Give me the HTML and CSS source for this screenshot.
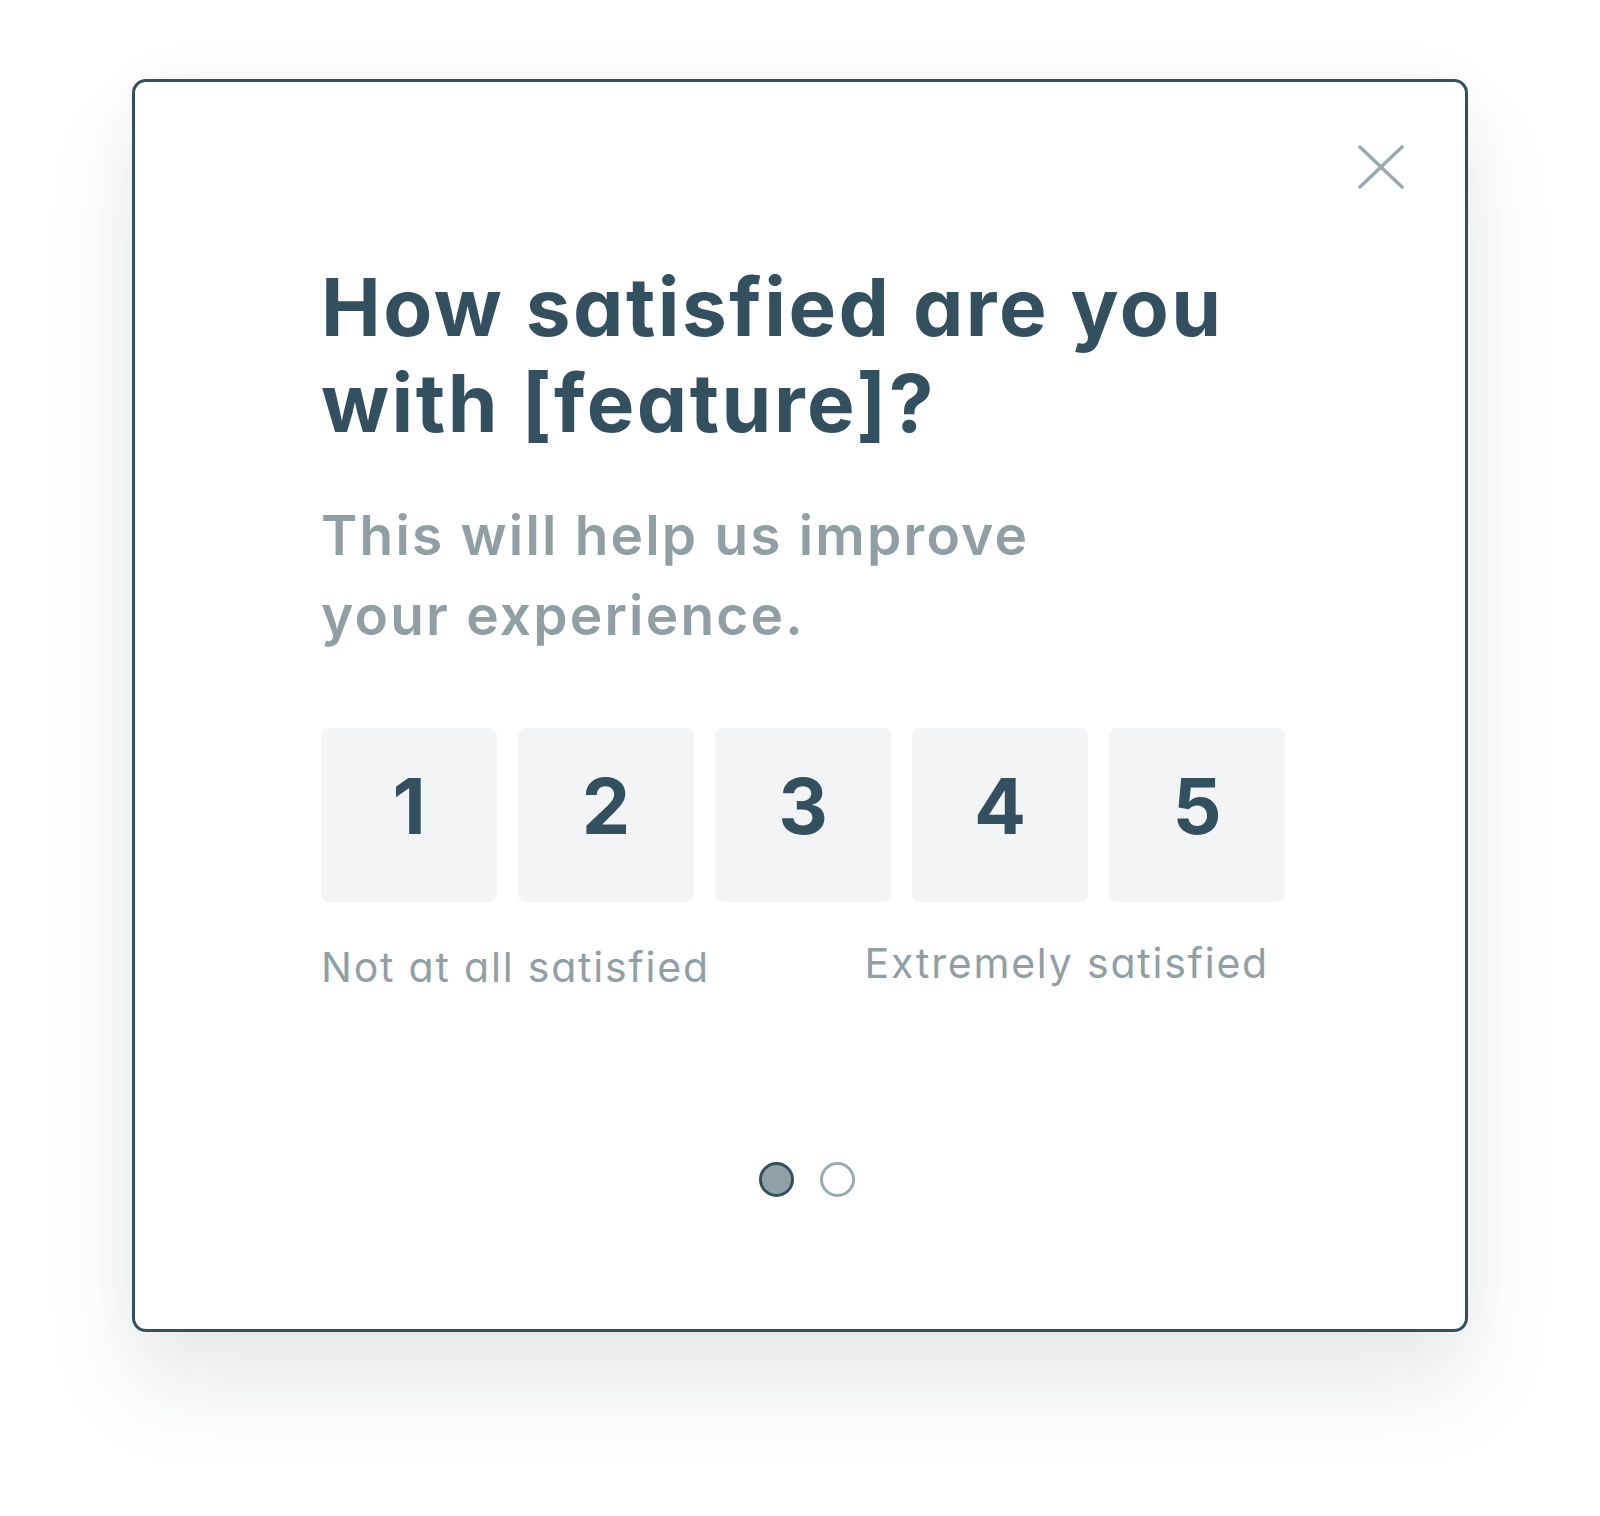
FILE: index.html
```html
<!DOCTYPE html>
<html>
<head>
    <title>Feedback</title>
    <link rel="stylesheet" href="styles.css">
</head>
<body>
    <div class="survey-card">
        <button class="close-btn" type="button" aria-label="Close">
            <svg width="46" height="44" viewBox="0 0 46 44">
                <line x1="2" y1="2" x2="44" y2="42" />
                <line x1="44" y1="2" x2="2" y2="42" />
            </svg>
        </button>

        <h1 class="survey-title">How satisfied are you<br>with [feature]?</h1>
        <p class="survey-sub">This will help us improve<br>your experience.</p>

        <div class="scale">
            <button class="scale-item" type="button">1</button>
            <button class="scale-item" type="button">2</button>
            <button class="scale-item" type="button">3</button>
            <button class="scale-item" type="button">4</button>
            <button class="scale-item" type="button">5</button>
        </div>

        <div class="scale-labels">
            <span class="scale-label">Not at all satisfied</span>
            <span class="scale-label scale-label-right">Extremely satisfied</span>
        </div>

        <div class="pager">
            <span class="pager-dot active"></span>
            <span class="pager-dot"></span>
        </div>
    </div>
</body>
</html>
```

FILE: styles.css
```css
html, body {
    min-height: 1516px;
}

body {
    font-family: Inter, "Noto Sans", sans-serif;
    font-feature-settings: "cv11" 1;
    background-color: #fff;
    margin: 0;
    padding: 0;
}

.survey-card {
    position: relative;
    box-sizing: border-box;
    width: 1336px;
    height: 1253px;
    margin: 79px 0 184px 132px;
    padding: 177px 0 0 186px;
    background-color: #fff;
    border: 3px solid #34505f;
    border-radius: 14px;
    box-shadow: 0 55px 90px rgba(30, 50, 70, 0.10), 0 0 60px rgba(30, 50, 70, 0.03);
}

.close-btn {
    position: absolute;
    top: 63px;
    right: 61px;
    padding: 0;
    border: none;
    background: none;
    cursor: pointer;
}

.close-btn svg {
    display: block;
}

.close-btn line {
    stroke: #9ba9ae;
    stroke-width: 3.5;
    stroke-linecap: round;
}

.survey-title {
    margin: 0;
    color: #34505f;
    font-size: 80px;
    font-weight: 700;
    line-height: 96px;
    letter-spacing: 2.5px;
}

.survey-sub {
    margin: 44px 0 0;
    color: #919fa5;
    font-size: 55px;
    font-weight: 600;
    line-height: 80px;
    letter-spacing: 2.2px;
}

.scale {
    display: flex;
    gap: 21px;
    margin-top: 73px;
}

.scale-item {
    width: 176px;
    height: 174px;
    padding: 0 0 18px;
    border: none;
    border-radius: 8px;
    background-color: #f3f4f6;
    color: #34505f;
    font-family: inherit;
    font-feature-settings: inherit;
    font-size: 77px;
    font-weight: 700;
    cursor: pointer;
}

.scale-labels {
    display: flex;
    justify-content: space-between;
    width: 964px;
    margin-top: 40px;
}

.scale-label {
    color: #919fa5;
    font-size: 41px;
    line-height: 50px;
    letter-spacing: 1.8px;
}

.scale-label-right {
    margin: -4px 16px 0 0;
}

.pager {
    display: flex;
    justify-content: center;
    gap: 26px;
    width: 964px;
    margin-top: 170px;
    padding-left: 4px;
}

.pager-dot {
    box-sizing: border-box;
    width: 35px;
    height: 35px;
    border: 3.5px solid #9aabb0;
    border-radius: 50%;
    background-color: #fff;
}

.pager-dot.active {
    border-color: #34505f;
    background-color: #91a0a7;
}
```
